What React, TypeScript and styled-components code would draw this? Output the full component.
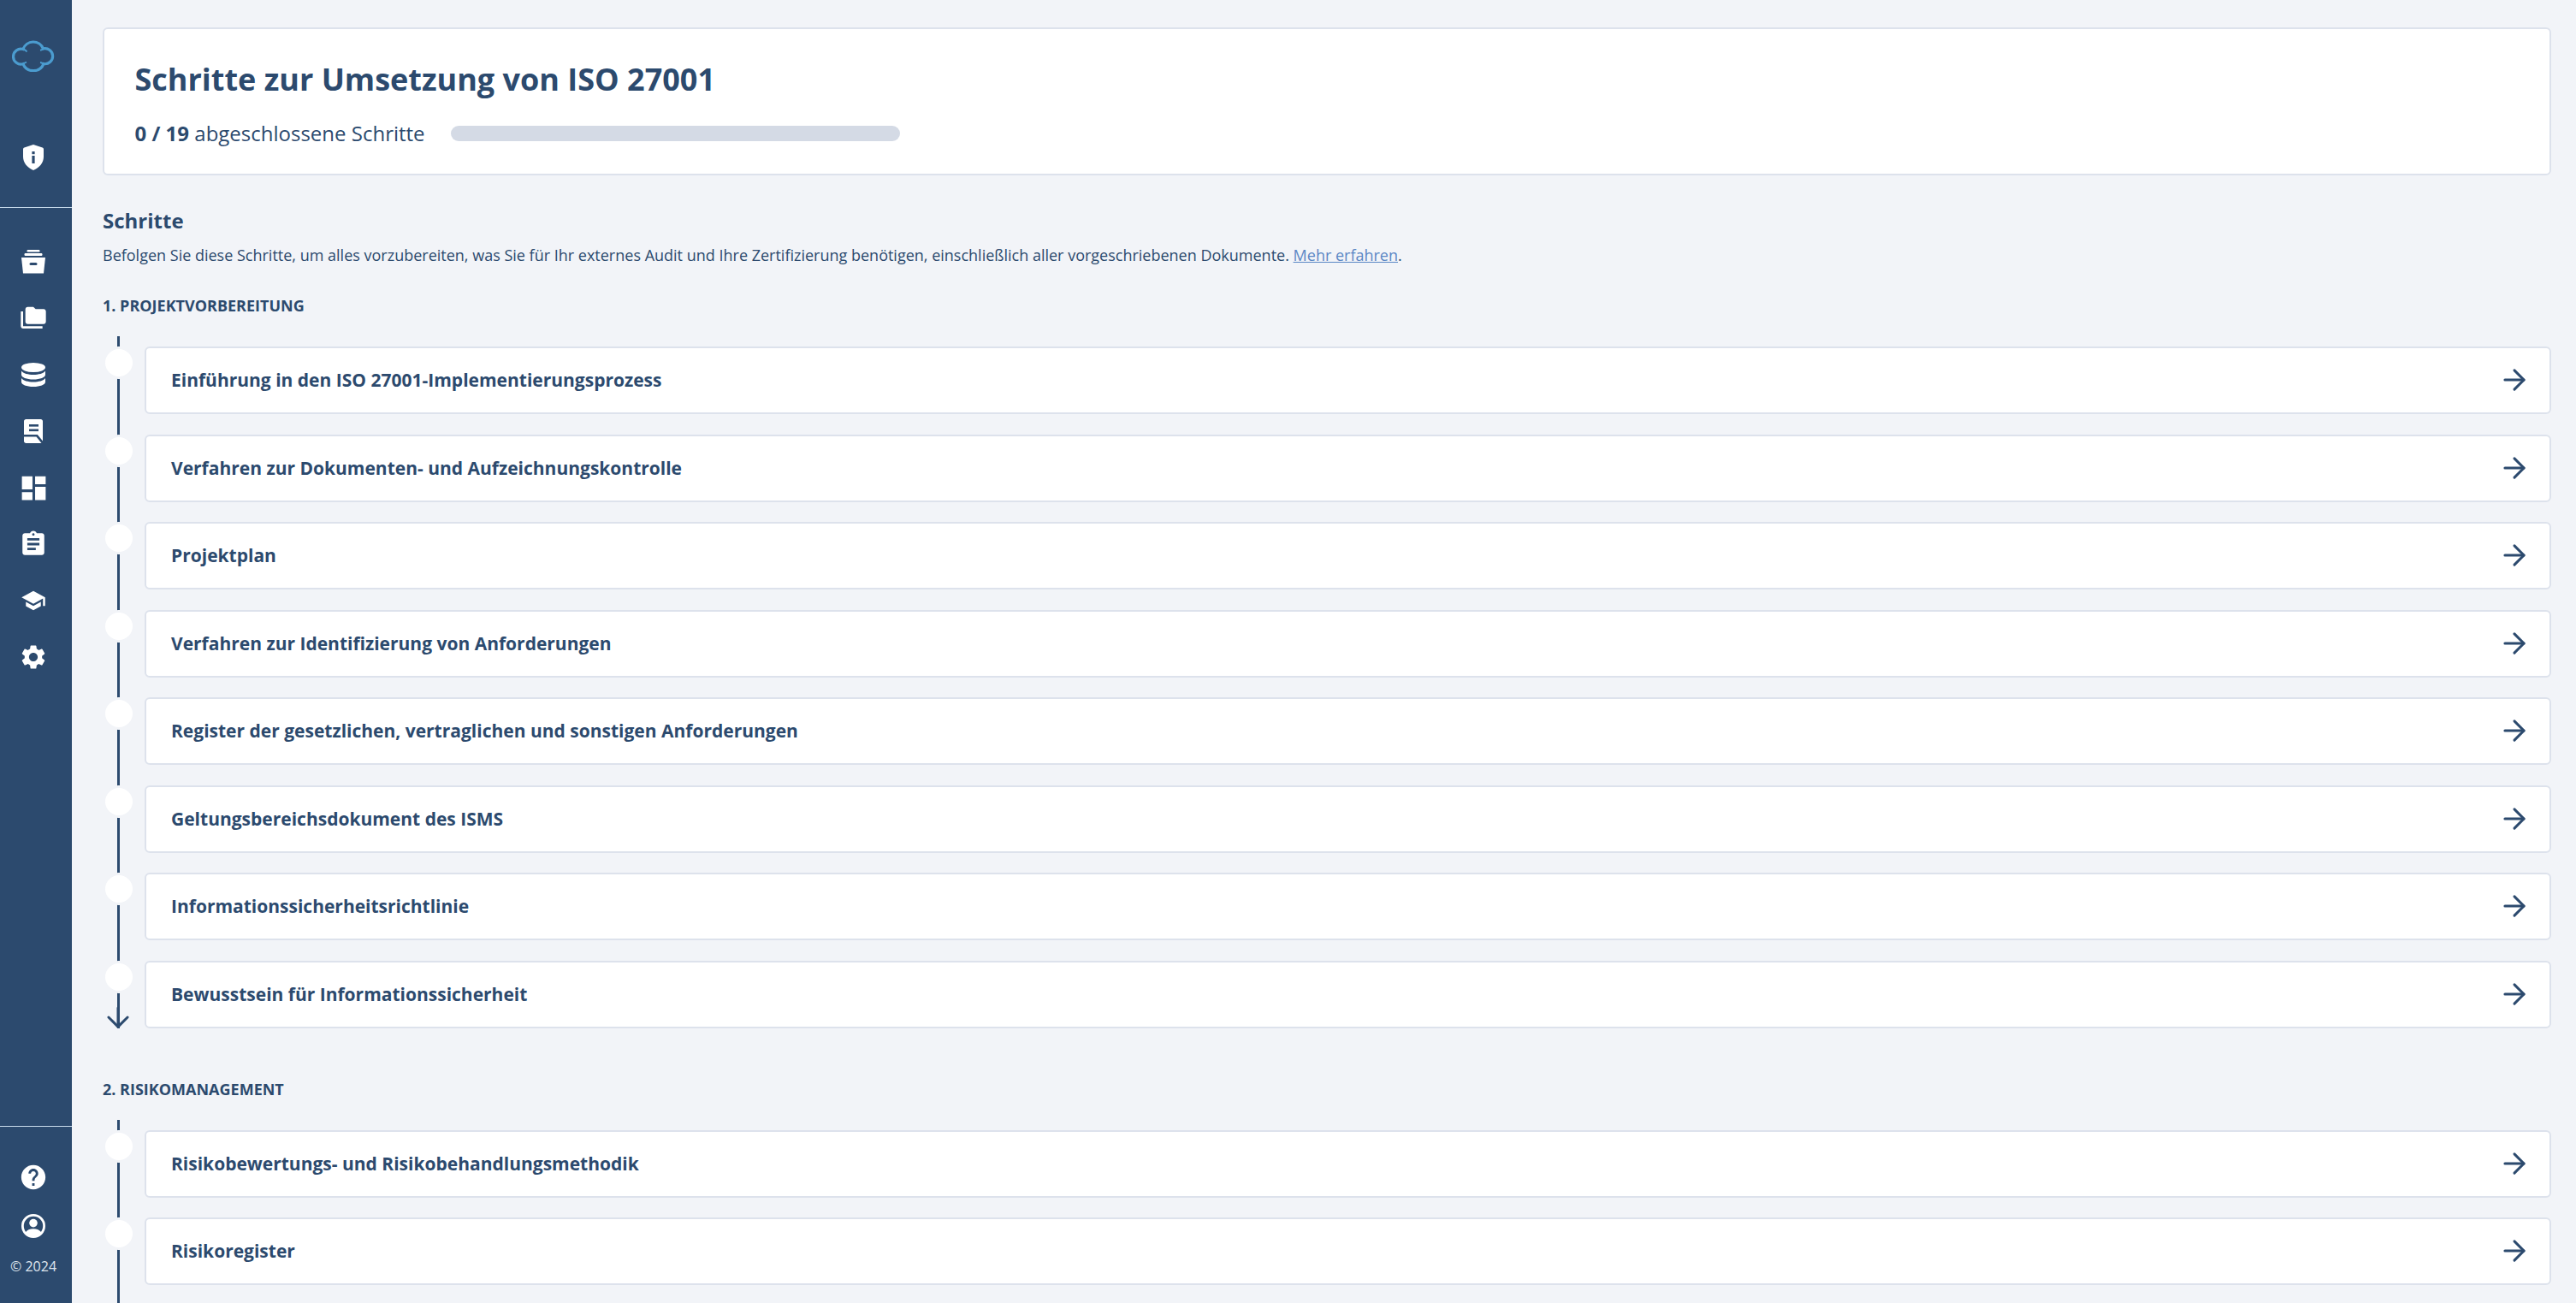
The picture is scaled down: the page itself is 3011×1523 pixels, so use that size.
import styled, { createGlobalStyle } from "styled-components";
import { MdAssignment, MdDashboard, MdFolderCopy, MdHelp, MdSchool, MdSettings } from "react-icons/md";
import { ArrowRight, ArrowDown } from "lucide-react";

const navy = "#2c4a6e";

const GlobalStyle = createGlobalStyle`
    html, body {
        margin: 0;
        height: 100%;
        overflow: hidden;
        background: #f2f4f8;
        font-family: "Open Sans", "Liberation Sans", sans-serif;
        color: ${navy};
    }
    * {
        box-sizing: border-box;
    }
`;

const CloudLogo = () => (
    <svg width="50" height="37" viewBox="0 0 50 37" fill="none" stroke="#4b9ccf" strokeWidth="3.2">
        <path d="M13 10.5A12.5 12.5 0 0 1 36.5 10A9 9 0 1 1 37 27.6A13 13 0 0 1 13 27.8A9 9 0 1 1 13 10.5Z" />
        <path d="M13 10.5C15 11 16.5 12 17.5 13.5" strokeWidth="2" />
        <path d="M36.5 10C35.5 11 34.5 11.5 33 11.8" strokeWidth="2" />
        <path d="M13 27.8C14.5 26.5 15.5 26 17 25.6" strokeWidth="2" />
        <path d="M37 27.6C35.5 26.8 34.5 26.2 33 26" strokeWidth="2" />
    </svg>
);

const ShieldInfo = () => (
    <svg width="24" height="30" viewBox="0 0 24 30">
        <path fill="#fff" d="M12 0L22.6 3.6C23.4 3.9 24 4.6 24 5.5V14C24 21.6 19 27 12 30C5 27 0 21.6 0 14V5.5C0 4.6 .6 3.9 1.4 3.6Z" />
        <rect x="10.4" y="8" width="3.2" height="3.2" fill={navy} />
        <rect x="10.4" y="13" width="3.2" height="9" fill={navy} />
    </svg>
);

const ArchiveBox = () => (
    <svg width="28" height="28" viewBox="0 0 28 28">
        <rect x="6.5" y="0" width="15" height="2.4" rx="1.2" fill="#fff" />
        <rect x="3.5" y="4" width="21" height="3" rx="1.2" fill="#fff" />
        <path fill="#fff" d="M0 9H28L26 27.5H2Z" />
        <rect x="9.5" y="15" width="9" height="3" rx="1.5" fill={navy} />
    </svg>
);

const DatabaseIcon = () => (
    <svg width="28" height="28" viewBox="0 0 28 28" fill="#fff">
        <ellipse cx="14" cy="5.5" rx="14" ry="5.5" />
        <path d="M0 9.5C2 12.5 8 14 14 14C20 14 26 12.5 28 9.5V14C28 17 22 19.5 14 19.5C6 19.5 0 17 0 14Z" />
        <path d="M0 18C2 21 8 22.5 14 22.5C20 22.5 26 21 28 18V22.5C28 25.5 22 28 14 28C6 28 0 25.5 0 22.5Z" />
    </svg>
);

const NoteIcon = () => (
    <svg width="22" height="28" viewBox="0 0 22 28">
        <path fill="#fff" d="M2.5 0H19.5C21 0 22 1 22 2.5V25.5L15.8 18H0V2.5C0 1 1 0 2.5 0Z" />
        <path fill="#fff" d="M0 20.5H14.5L20.5 28H2.5C1 28 0 27 0 25.5Z" />
        <rect x="6" y="6" width="11" height="2.6" fill={navy} />
        <rect x="6" y="11.5" width="11" height="2.6" fill={navy} />
    </svg>
);

const AccountRing = () => (
    <svg width="28" height="28" viewBox="0 0 28 28">
        <circle cx="14" cy="14" r="12.6" fill={navy} stroke="#fff" strokeWidth="2.8" />
        <circle cx="14" cy="10.6" r="4.8" fill="#fff" />
        <path fill="#fff" d="M4.6 21.6C6.5 18.6 10 17.2 14 17.2C18 17.2 21.5 18.6 23.4 21.6C21 24.6 18 26 14 26C10 26 7 24.6 4.6 21.6Z" />
    </svg>
);

const topNav = [
    <ArchiveBox />,
    <MdFolderCopy size={32} />,
    <DatabaseIcon />,
    <NoteIcon />,
    <MdDashboard size={37} />,
    <MdAssignment size={34} />,
    <MdSchool size={30} />,
    <MdSettings size={34} />,
];

const sections = [
    {
        title: "1. Projektvorbereitung",
        steps: [
            "Einführung in den ISO 27001-Implementierungsprozess",
            "Verfahren zur Dokumenten- und Aufzeichnungskontrolle",
            "Projektplan",
            "Verfahren zur Identifizierung von Anforderungen",
            "Register der gesetzlichen, vertraglichen und sonstigen Anforderungen",
            "Geltungsbereichsdokument des ISMS",
            "Informationssicherheitsrichtlinie",
            "Bewusstsein für Informationssicherheit",
        ],
        ended: true,
    },
    {
        title: "2. Risikomanagement",
        steps: ["Risikobewertungs- und Risikobehandlungsmethodik", "Risikoregister"],
        ended: false,
    },
];

export default function App() {
    return (
        <Layout>
            <GlobalStyle />
            <Sidebar>
                <LogoBlock>
                    <CloudLogo />
                    <ShieldSlot>
                        <ShieldInfo />
                    </ShieldSlot>
                </LogoBlock>
                <Nav>
                    {topNav.map((icon, i) => (
                        <NavItem key={i}>{icon}</NavItem>
                    ))}
                </Nav>
                <SideFooter>
                    <NavItem $short>
                        <MdHelp size={34} />
                    </NavItem>
                    <NavItem $short>
                        <AccountRing />
                    </NavItem>
                    <Copy>© 2024</Copy>
                </SideFooter>
            </Sidebar>
            <Main>
                <HeaderCard>
                    <Title>Schritte zur Umsetzung von ISO 27001</Title>
                    <ProgressRow>
                        <ProgressText>
                            <b>0 / 19</b> abgeschlossene Schritte
                        </ProgressText>
                        <ProgressBar />
                    </ProgressRow>
                </HeaderCard>
                <Heading>Schritte</Heading>
                <Intro>
                    Befolgen Sie diese Schritte, um alles vorzubereiten, was Sie für Ihr externes Audit und Ihre
                    Zertifizierung benötigen, einschließlich aller vorgeschriebenen Dokumente.{" "}
                    <MoreLink href="#">Mehr erfahren</MoreLink>.
                </Intro>
                {sections.map((section) => (
                    <Section key={section.title}>
                        <SectionTitle>{section.title}</SectionTitle>
                        <StepList $ended={section.ended}>
                            {section.steps.map((step) => (
                                <StepRow key={step}>
                                    <Marker />
                                    <StepCard>
                                        <StepName>{step}</StepName>
                                        <ArrowRight size={38} strokeWidth={1.9} />
                                    </StepCard>
                                </StepRow>
                            ))}
                            {section.ended && (
                                <LineEnd>
                                    <ArrowDown size={38} strokeWidth={1.9} />
                                </LineEnd>
                            )}
                        </StepList>
                    </Section>
                ))}
            </Main>
        </Layout>
    );
}

const Layout = styled.div`
    display: flex;
    height: 100vh;
    overflow: hidden;
`;

const Sidebar = styled.aside`
    flex: 0 0 84px;
    display: flex;
    flex-direction: column;
    background: ${navy};
    color: #fff;
`;

const LogoBlock = styled.div`
    height: 243px;
    padding: 47px 6px 0 0;
    display: flex;
    flex-direction: column;
    align-items: center;
    border-bottom: 1px solid #c9dcec;
`;

const ShieldSlot = styled.div`
    margin-top: 85px;
    display: flex;
`;

const Nav = styled.nav`
    flex: 1;
    padding: 30px 6px 0 0;
`;

const NavItem = styled.div<{ $short?: boolean }>`
    height: ${(p) => (p.$short ? "57px" : "66px")};
    display: flex;
    align-items: center;
    justify-content: center;
`;

const SideFooter = styled.div`
    height: 207px;
    padding: 30px 6px 0 0;
    border-top: 1px solid #c9dcec;
`;

const Copy = styled.div`
    margin-top: 8px;
    font-size: 16px;
    text-align: center;
    color: #dfe6ee;
`;

const Main = styled.main`
    flex: 1;
    min-width: 0;
    padding: 32px 29px 0 36px;
`;

const HeaderCard = styled.section`
    height: 173px;
    padding: 34px 35.5px 0;
    background: #fff;
    border: 2px solid #dde2ec;
    border-radius: 6px;
`;

const Title = styled.h1`
    margin: 0;
    font-size: 36px;
    line-height: 50px;
    font-weight: 700;
`;

const ProgressRow = styled.div`
    display: flex;
    align-items: center;
    gap: 30px;
    margin-top: 21px;
`;

const ProgressText = styled.div`
    font-size: 24px;
    line-height: 34px;
`;

const ProgressBar = styled.div`
    width: 525px;
    height: 18px;
    border-radius: 9px;
    background: #d4dae5;
`;

const Heading = styled.h2`
    margin: 36px 0 0;
    font-size: 24px;
    line-height: 34px;
    font-weight: 700;
`;

const Intro = styled.p`
    margin: 8px 0 0;
    font-size: 18px;
    line-height: 30px;
`;

const MoreLink = styled.a`
    color: #5b87c5;
`;

const Section = styled.section`
    margin-bottom: 57px;
`;

const SectionTitle = styled.h3`
    margin: 30px 0 0;
    font-size: 18px;
    line-height: 28px;
    font-weight: 700;
    text-transform: uppercase;
`;

const StepList = styled.div<{ $ended: boolean }>`
    position: relative;
    margin-top: 22px;
    padding-top: 12px;
    padding-bottom: ${(p) => (p.$ended ? "0" : "120px")};

    &::before {
        content: "";
        position: absolute;
        left: 17px;
        top: 0;
        bottom: 0;
        width: 3px;
        background: ${navy};
    }
`;

const StepRow = styled.div`
    position: relative;
    display: flex;
    align-items: flex-start;
    margin-bottom: 23.5px;

    &:last-of-type {
        margin-bottom: 0;
    }
`;

const Marker = styled.div`
    flex: 0 0 38px;
    height: 38px;
    margin-right: 11px;
    border: 3px solid #f2f4f8;
    border-radius: 50%;
    background: #fff;
    position: relative;
    z-index: 1;
`;

const StepCard = styled.div`
    flex: 1;
    height: 79px;
    padding: 0 22px 1px 29px;
    display: flex;
    align-items: center;
    justify-content: space-between;
    background: #fff;
    border: 2px solid #dde2ec;
    border-radius: 6px;
`;

const StepName = styled.span`
    font-size: 21px;
    font-weight: 700;
`;

const LineEnd = styled.div`
    position: absolute;
    left: -1px;
    bottom: -6px;
    width: 38px;
    height: 38px;
    color: ${navy};
`;
